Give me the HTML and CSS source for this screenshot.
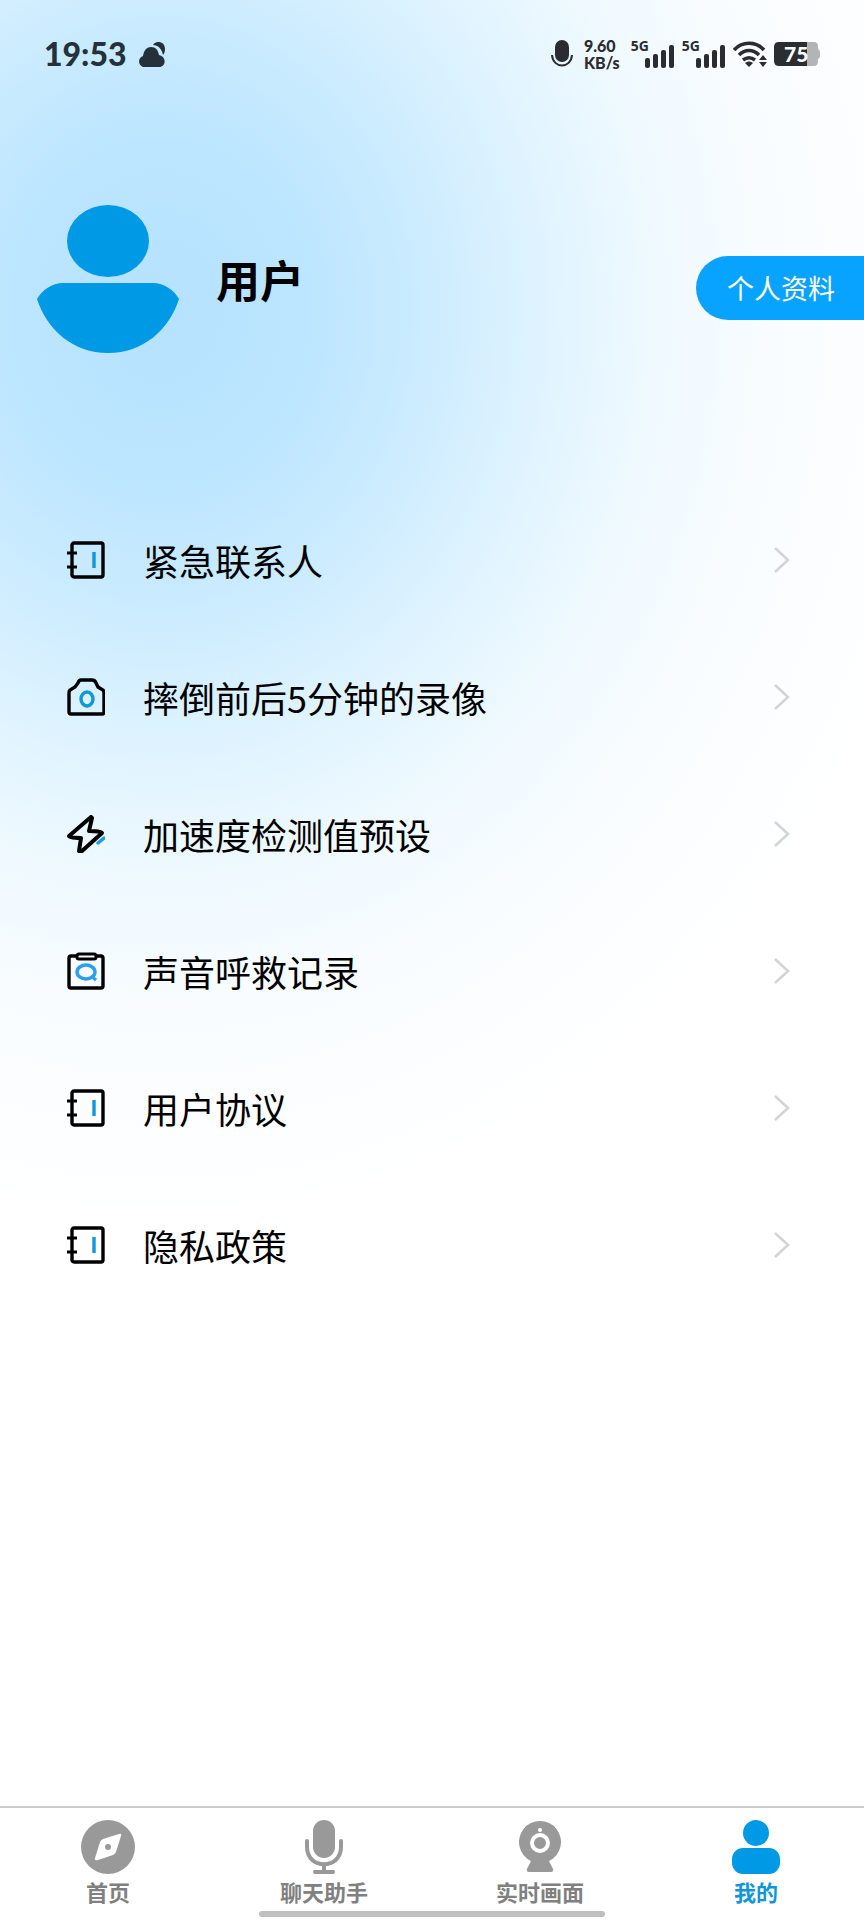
FILE: index.html
```
<!DOCTYPE html>
<html lang="zh-CN">
<head>
    <meta charset="UTF-8">
    <meta name="viewport" content="width=device-width, initial-scale=1.0">
    <title>我的</title>
    <link rel="stylesheet" href="styles.css">
</head>
<body>
    <!-- shared icons -->
    <svg class="sprite" aria-hidden="true">
        <symbol id="icon-book" viewBox="0 0 38 38">
            <rect x="5" y="2" width="31" height="34" rx="2" fill="none" stroke="#000" stroke-width="3.4"/>
            <path d="M0 12h10M0 26h10" stroke="#000" stroke-width="3"/>
            <path d="M27 11v16" stroke="#1296db" stroke-width="3.4"/>
        </symbol>
        <symbol id="icon-arrow" viewBox="0 0 16 26">
            <path d="M1 1l13 12L1 25" fill="none" stroke="#d2d4d6" stroke-width="2.5"/>
        </symbol>
        <symbol id="icon-signal" viewBox="0 0 30 24">
            <rect x="0" y="14" width="5" height="10" rx="2"/>
            <rect x="8" y="10" width="5" height="14" rx="2"/>
            <rect x="16" y="6" width="5" height="18" rx="2"/>
            <rect x="24" y="1" width="5" height="23" rx="2"/>
        </symbol>
    </svg>

    <div class="page">
        <header class="status">
            <div class="status-left">
                <span class="time">19:53</span>
                <svg width="26" height="25" viewBox="0 0 26 25" fill="#24303a">
                    <path d="M6 25C-1 25-2 16 4 14 5 8 8 5 12 5c5 0 7 3 8 8 8 2 7 12 0 12z"/>
                    <path d="M14 3c3-5 12-4 12 4 0 3-1 5-2 6C23 7 19 3 14 3z"/>
                </svg>
            </div>
            <div class="status-right">
                <svg width="22" height="28" viewBox="0 0 22 28">
                    <rect x="4" y="0" width="14" height="22" rx="7" fill="#2b2c31"/>
                    <path d="M1 15c1 14 19 14 20 0" fill="none" stroke="#2b2c31" stroke-width="2"/>
                </svg>
                <div class="speed">
                    <span>9.60</span>
                    <span>KB/s</span>
                </div>
                <span class="signal"><span>5G</span><svg width="30" height="24"><use href="#icon-signal"/></svg></span>
                <span class="signal"><span>5G</span><svg width="30" height="24"><use href="#icon-signal"/></svg></span>
                <svg class="wifi" width="34" height="26" viewBox="0 0 34 26">
                    <g fill="none" stroke="#2b2c31" stroke-width="3.6">
                        <path d="M1 9C9 0 23 0 31 9"/>
                        <path d="M6 14c6-6 14-6 20 0"/>
                        <path d="M10 19c4-3 8-3 12 0"/>
                    </g>
                    <path d="M12 22c3-2 5-2 8 0l-4 4zM30 14l4 5h-8zM30 26l4-5h-8z" fill="#2b2c31"/>
                </svg>
                <span class="battery">
                    <svg width="46" height="24" viewBox="0 0 46 24">
                        <path d="M33 0h7q4 0 4 5v2q2 1 2 3v4q0 2-2 3v2q0 5-4 5h-7z" fill="#b2b5b8"/>
                        <path d="M5 0h28v24H5q-5 0-5-5V5q0-5 5-5z" fill="#2b2e30"/>
                    </svg>
                    <span class="battery-level">75</span>
                </span>
            </div>
        </header>

        <section class="profile">
            <svg class="avatar" width="144" height="150" viewBox="0 0 144 150" fill="#0099e6">
                <ellipse cx="72" cy="37" rx="41" ry="36"/>
                <path d="M27 79h90c11 0 21 7 26 16-10 31-36 54-71 54S11 126 1 95c5-9 15-16 26-16z"/>
            </svg>
            <h1 class="name">用户</h1>
            <button class="profile-btn" type="button">个人资料</button>
        </section>

        <nav class="menu">
            <a class="menu-item" href="#contacts">
                <svg class="menu-icon"><use href="#icon-book"/></svg>
                <span class="menu-text">紧急联系人</span>
                <svg class="arrow"><use href="#icon-arrow"/></svg>
            </a>
            <a class="menu-item" href="#videos">
                <svg class="menu-icon" viewBox="0 0 38 38" fill="none">
                    <path d="M14 2h11q3 0 4 3l2 4 5 3q1 1 1 3v19q0 2-2 2H4q-2 0-2-2V15q0-2 1-3l5-3 3-4q1-3 3-3z" stroke="#000" stroke-width="3.4"/>
                    <ellipse cx="20" cy="21" rx="6" ry="7" stroke="#1296db" stroke-width="3.4"/>
                </svg>
                <span class="menu-text">摔倒前后5分钟的录像</span>
                <svg class="arrow"><use href="#icon-arrow"/></svg>
            </a>
            <a class="menu-item" href="#speed">
                <svg class="menu-icon" viewBox="0 0 38 38" fill="none" stroke-linejoin="round" stroke-linecap="round">
                    <path d="M24 2L2 21q0 2 12 2l-2 13q1 1 3 0l20-18q0-2-13-2l3-13z" stroke="#000" stroke-width="4"/>
                    <path d="M31 28l6-5" stroke="#1e9bee" stroke-width="3.4"/>
                </svg>
                <span class="menu-text">加速度检测值预设</span>
                <svg class="arrow"><use href="#icon-arrow"/></svg>
            </a>
            <a class="menu-item" href="#calls">
                <svg class="menu-icon" viewBox="0 0 38 38" fill="none">
                    <path d="M10 4H4Q2 4 2 6v28q0 2 2 2h30q2 0 2-2V6q0-2-2-2h-5" stroke="#000" stroke-width="3.4"/>
                    <rect x="10" y="2" width="19" height="5" rx="2" stroke="#000" stroke-width="3"/>
                    <ellipse cx="19" cy="20" rx="9" ry="7" stroke="#2b9ff0" stroke-width="3.4"/>
                    <path d="M24 24l5 4" stroke="#2b9ff0" stroke-width="3.4"/>
                </svg>
                <span class="menu-text">声音呼救记录</span>
                <svg class="arrow"><use href="#icon-arrow"/></svg>
            </a>
            <a class="menu-item" href="#agreement">
                <svg class="menu-icon"><use href="#icon-book"/></svg>
                <span class="menu-text">用户协议</span>
                <svg class="arrow"><use href="#icon-arrow"/></svg>
            </a>
            <a class="menu-item" href="#privacy">
                <svg class="menu-icon"><use href="#icon-book"/></svg>
                <span class="menu-text">隐私政策</span>
                <svg class="arrow"><use href="#icon-arrow"/></svg>
            </a>
        </nav>

        <nav class="tabbar">
            <a class="tab" href="#home">
                <svg class="tab-icon" viewBox="0 0 54 54">
                    <circle cx="27" cy="27" r="27" fill="#999"/>
                    <path d="M22 19l16-5q3-1 2 2l-5 16q-1 2-3 3l-15 5q-4 1-3-2l5-16q1-2 3-3z" fill="#fff"/>
                    <circle cx="27" cy="27" r="3" fill="#999"/>
                </svg>
                <span>首页</span>
            </a>
            <a class="tab" href="#chat">
                <svg class="tab-icon" viewBox="0 0 54 54" fill="none" stroke="#999" stroke-width="4" stroke-linecap="round">
                    <rect x="16" y="0" width="22" height="38" rx="11" fill="#999" stroke="none"/>
                    <path d="M10 21v6c0 23 34 23 34 0v-6M27 44v7M18 52h18"/>
                </svg>
                <span>聊天助手</span>
            </a>
            <a class="tab" href="#live">
                <svg class="tab-icon" viewBox="0 0 54 54">
                    <path d="M18 41a21 21 0 1 1 18 0l4 8q1 3-2 3H16q-3 0-2-3z" fill="#999"/>
                    <circle cx="27" cy="23" r="8" fill="#999" stroke="#fff" stroke-width="4"/>
                    <circle cx="27" cy="10" r="2" fill="#fff"/>
                </svg>
                <span>实时画面</span>
            </a>
            <a class="tab active" href="#mine">
                <svg class="tab-icon" viewBox="0 0 54 54" fill="#0099e6">
                    <circle cx="27" cy="13" r="13"/>
                    <rect x="3" y="28" width="48" height="26" rx="11"/>
                </svg>
                <span>我的</span>
            </a>
            <div class="home-bar"></div>
        </nav>
    </div>
</body>
</html>
```
FILE: styles.css
```
* {
    box-sizing: border-box;
}
body {
    margin: 0;
    font-family: "Noto Sans CJK SC", sans-serif;
    color: #000;
}
a {
    color: inherit;
    text-decoration: none;
}
svg {
    display: block;
    flex-shrink: 0;
}
.sprite {
    display: none;
}
.page {
    display: flex;
    flex-direction: column;
    min-height: 100vh;
    background: radial-gradient(ellipse 800px 920px at 160px 310px, #b5e2ff 0%, #bde6ff 20%, #cdecff 34%, #def3ff 47%, #eef9ff 61%, #f8fcff 76%, #fff 100%) #fff;
}

/* status bar */
.status {
    display: flex;
    justify-content: space-between;
    align-items: center;
    height: 108px;
    padding: 0 44px;
    font-family: Lato, sans-serif;
    font-weight: 900;
    color: #24303a;
}
.status-left,
.status-right {
    display: flex;
    align-items: center;
}
.status-left {
    gap: 12px;
}
.status-right {
    gap: 11px;
    color: #2b2c31;
    fill: #2b2c31;
}
.time {
    font-size: 32px;
    line-height: 36px;
}
.speed {
    display: flex;
    flex-direction: column;
    font-size: 16px;
    line-height: 17px;
}
.signal {
    display: flex;
    align-items: flex-end;
    height: 28px;
    margin-right: -4px;
}
.signal span {
    align-self: flex-start;
    margin-right: -4px;
    font-family: "Noto Sans", sans-serif;
    font-size: 14px;
    font-weight: 700;
    line-height: 12px;
}
.battery {
    position: relative;
    margin-left: -4px;
}
.battery-level {
    position: absolute;
    top: 0;
    left: 10px;
    color: #fff;
    font-size: 21px;
    line-height: 24px;
}

/* user info */
.profile {
    display: flex;
    align-items: center;
    margin-top: 96px;
    padding-left: 36px;
}
.name {
    flex: 1;
    margin: 0 0 0 36px;
    font-size: 44px;
    font-weight: 700;
    line-height: 60px;
}
.profile-btn {
    width: 168px;
    height: 64px;
    margin-top: 18px;
    padding: 0 28px 0 30px;
    border: none;
    border-radius: 32px 0 0 32px;
    background-color: #08a2ff;
    color: #fff;
    font-family: inherit;
    font-size: 27px;
    line-height: 64px;
    white-space: nowrap;
    cursor: pointer;
}

/* menu list */
.menu {
    display: flex;
    flex-direction: column;
    flex: 1;
    margin-top: 137px;
}
.menu-item {
    display: flex;
    align-items: center;
    height: 137px;
    padding: 0 74px 0 67px;
}
.menu-icon {
    width: 38px;
    height: 38px;
}
.menu-text {
    flex: 1;
    margin-left: 38px;
    font-size: 36px;
    line-height: 50px;
}
.arrow {
    width: 16px;
    height: 26px;
}

/* bottom tabs */
.tabbar {
    position: relative;
    display: flex;
    height: 114px;
    border-top: 2px solid #ccc;
    background-color: #fff;
}
.tab {
    display: flex;
    flex: 1;
    flex-direction: column;
    align-items: center;
    padding-top: 12px;
    color: #808080;
    font-size: 22px;
    font-weight: 700;
    line-height: 34px;
}
.tab.active {
    color: #1296db;
}
.tab-icon {
    width: 54px;
    height: 54px;
}
.home-bar {
    position: absolute;
    bottom: 3px;
    left: 30%;
    width: 40%;
    height: 6px;
    border-radius: 3px;
    background-color: #c0c0c0;
}
```
